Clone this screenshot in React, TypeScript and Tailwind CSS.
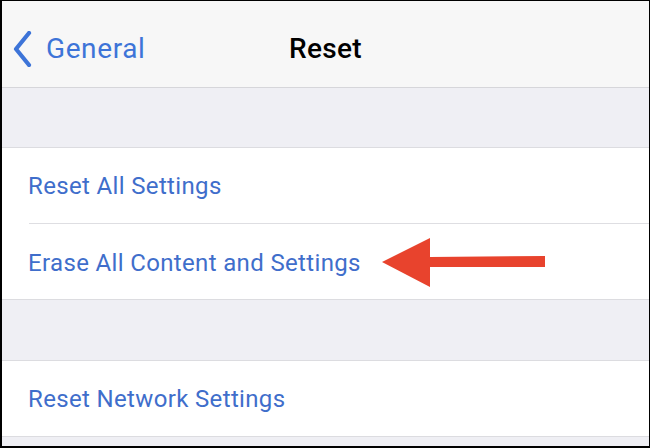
import React from "react";

function Chevron() {
  return (
    <svg width="20" height="36" viewBox="0 0 20 36" className="shrink-0">
      <path d="M16 2 L3 18 L16 34" fill="none" stroke="#3d74d8" strokeWidth="4.2" strokeLinecap="round" strokeLinejoin="round" />
    </svg>
  );
}

function Arrow() {
  return (
    <svg width="166" height="52" viewBox="0 0 166 52" className="absolute left-[379px] top-[13px]">
      <polygon points="1,25 49,1 49,20 164,19 164,30 49,30 49,50" fill="#e8432d" />
    </svg>
  );
}

const rowText = "text-[24px] leading-none text-[#3f6ecb] tracking-[0.35px]";

export default function App() {
  return (
    <div className="w-[650px] h-[448px] overflow-hidden border-l-2 border-t border-r border-b-2 border-black bg-[#efeff4] font-['Roboto','Liberation_Sans',sans-serif]">
      {/* nav bar */}
      <div className="h-[87px] bg-[#f7f7f7] border-b border-[#d6d6da] grid grid-cols-[1fr_auto_1fr] items-center pt-[9px]">
        <div className="flex items-center gap-[13px] pl-[11px]">
          <Chevron />
          <span className="text-[28px] leading-none text-[#3d74d8] tracking-[0.6px]">General</span>
        </div>
        <span className="text-[28px] leading-none font-medium text-black tracking-[0.3px]">Reset</span>
        <div />
      </div>

      <div className="h-[59px]" />

      {/* group 1 */}
      <div className="bg-white border-y border-[#dcdce0]">
        <div className="h-[75px] flex items-center pl-[26px] pt-[1px]">
          <span className={rowText}>Reset All Settings</span>
        </div>
        <div className="ml-[27px] h-px bg-[#dedee2]" />
        <div className="relative h-[75px] flex items-center pl-[26px] pt-[2px]">
          <span className={rowText}>Erase All Content and Settings</span>
          <Arrow />
        </div>
      </div>

      <div className="h-[60px]" />

      {/* group 2 */}
      <div className="bg-white border-y border-[#dcdce0]">
        <div className="h-[75px] flex items-center pl-[26px] pt-[1px]">
          <span className={rowText}>Reset Network Settings</span>
        </div>
      </div>
    </div>
  );
}
